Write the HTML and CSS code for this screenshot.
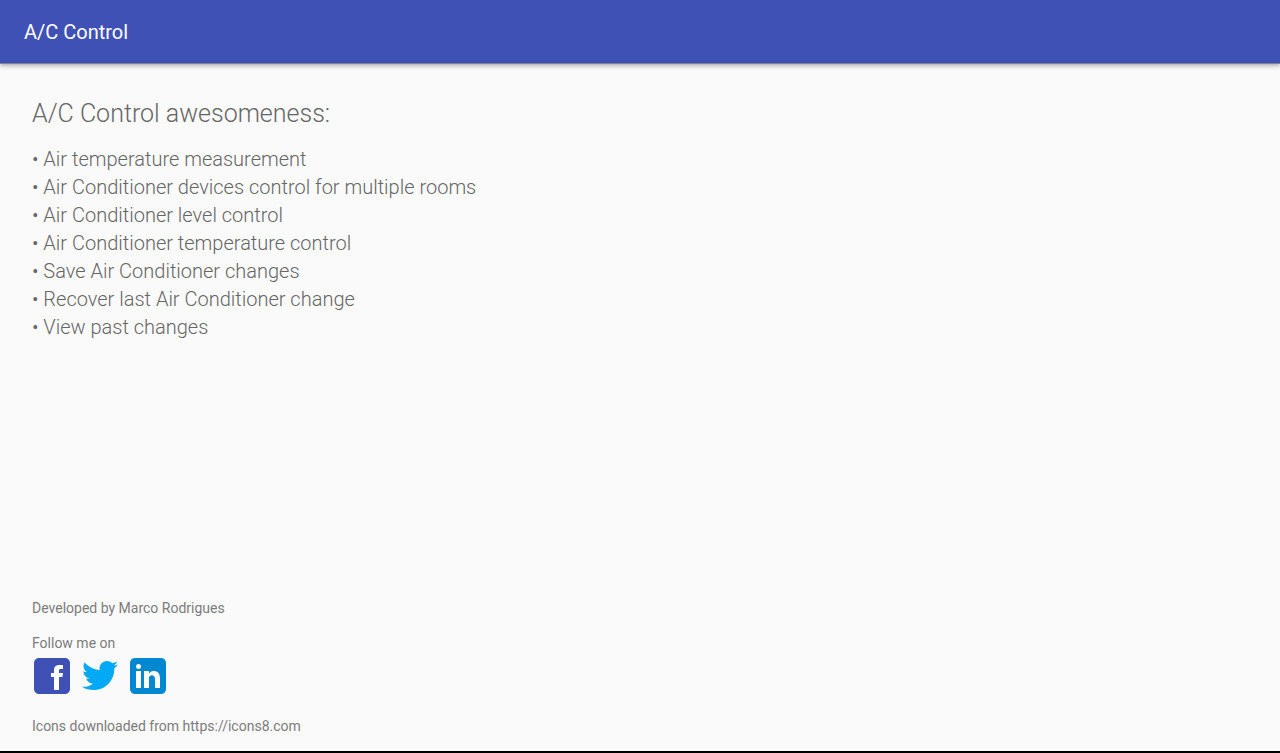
FILE: index.html
```html
<!DOCTYPE html>
<html lang="en">
<head>
<meta charset="utf-8">
<title>A/C Control</title>
<link rel="stylesheet" href="styles.css">
</head>
<body>
<header class="app-bar"><h1 class="app-title">A/C Control</h1></header>
<main class="content">
  <h2 class="heading">A/C Control awesomeness:</h2>
  <ul class="features">
    <li>• Air temperature measurement</li>
    <li>• Air Conditioner devices control for multiple rooms</li>
    <li>• Air Conditioner level control</li>
    <li>• Air Conditioner temperature control</li>
    <li>• Save Air Conditioner changes</li>
    <li>• Recover last Air Conditioner change</li>
    <li>• View past changes</li>
  </ul>
</main>
<footer class="about">
  <p class="note">Developed by Marco Rodrigues</p>
  <div class="follow">
    <p class="note">Follow me on</p>
    <nav class="social">
      <a href="#facebook" aria-label="Facebook"><svg class="icon" viewBox="0 0 48 48"><path fill="#3f51b5" d="M42 37c0 2.762-2.238 5-5 5H11c-2.761 0-5-2.238-5-5V11c0-2.762 2.239-5 5-5h26c2.762 0 5 2.238 5 5v26z"/><path fill="#fff" d="M34.368 25H31v13h-5V25h-3v-4h3v-2.41c.002-3.508 1.459-5.59 5.592-5.59H35v4h-2.287C31.104 17 31 17.6 31 18.723V21h4l-.632 4z"/></svg></a>
      <a href="#twitter" aria-label="Twitter"><svg class="icon" viewBox="0 0 48 48"><path fill="#03a9f4" d="M42 12.429c-1.323.586-2.746.977-4.247 1.162 1.526-.906 2.7-2.351 3.251-4.058-1.428.837-3.01 1.452-4.693 1.776C34.967 9.884 33.05 9 30.926 9c-4.08 0-7.387 3.278-7.387 7.32 0 .572.067 1.129.193 1.67-6.138-.308-11.582-3.226-15.224-7.654-.64 1.082-1 2.349-1 3.686 0 2.541 1.301 4.778 3.285 6.096-1.211-.037-2.351-.374-3.349-.914v.086c0 3.551 2.547 6.508 5.923 7.181-.617.169-1.269.263-1.941.263-.477 0-.942-.054-1.392-.135.94 2.902 3.667 5.023 6.898 5.086-2.528 1.96-5.712 3.134-9.174 3.134-.598 0-1.183-.034-1.761-.104C9.268 36.786 13.152 38 17.321 38c13.585 0 21.017-11.156 21.017-20.834 0-.317-.01-.633-.025-.945C39.763 15.197 41.013 13.905 42 12.429"/></svg></a>
      <a href="#linkedin" aria-label="LinkedIn"><svg class="icon" viewBox="0 0 48 48"><path fill="#0288d1" d="M42 37c0 2.762-2.238 5-5 5H11c-2.761 0-5-2.238-5-5V11c0-2.762 2.239-5 5-5h26c2.762 0 5 2.238 5 5v26z"/><path fill="#fff" d="M12 19h5v17h-5zM14.485 17h-.028C12.965 17 12 15.888 12 14.499 12 13.08 12.995 12 14.514 12c1.521 0 2.458 1.08 2.486 2.499C17 15.887 16.035 17 14.485 17zM36 36h-5v-9.099c0-2.198-1.225-3.698-3.192-3.698-1.501 0-2.313 1.012-2.707 1.99C24.957 25.543 25 26.511 25 27v9h-5V19h5v2.616C25.721 20.5 26.85 19 29.738 19c3.578 0 6.261 2.25 6.261 7.274L36 36z"/></svg></a>
    </nav>
  </div>
  <p class="note">Icons downloaded from https://icons8.com</p>
</footer>
</body>
</html>
```
FILE: styles.css
```css
* {
  box-sizing: border-box;
}

body {
  display: flex;
  flex-direction: column;
  min-height: 100vh;
  margin: 0;
  border-bottom: 2px solid #000;
  background: #fafafa;
  color: #666;
  font-family: Roboto, "Liberation Sans", sans-serif;
}

h1, h2, p, ul {
  margin: 0;
  padding: 0;
}

.app-bar {
  display: flex;
  align-items: center;
  min-height: 64px;
  padding: 0 24px;
  background: #3f51b5;
  box-shadow: inset 0 -1px #7f828f, 0 1px 5px rgba(0, 0, 0, 0.4);
}

.app-title {
  color: #fff;
  font-size: 20px;
  font-weight: 400;
  line-height: 28px;
}

.content {
  flex: 1;
  padding: 32px 32px 0;
}

.heading {
  margin-bottom: 13px;
  font-size: 25px;
  font-weight: 300;
  line-height: 36px;
}

.features {
  list-style: none;
  font-size: 20px;
  font-weight: 300;
  line-height: 28px;
}

.about {
  display: flex;
  flex-direction: column;
  gap: 17px;
  padding: 0 32px 16px;
}

.note {
  color: #7c7c7c;
  font-size: 14px;
  font-weight: 400;
  line-height: 18px;
}

.social {
  display: flex;
  margin: 0 -4px;
}

.social a,
.icon {
  display: block;
  width: 48px;
  height: 48px;
}
```
